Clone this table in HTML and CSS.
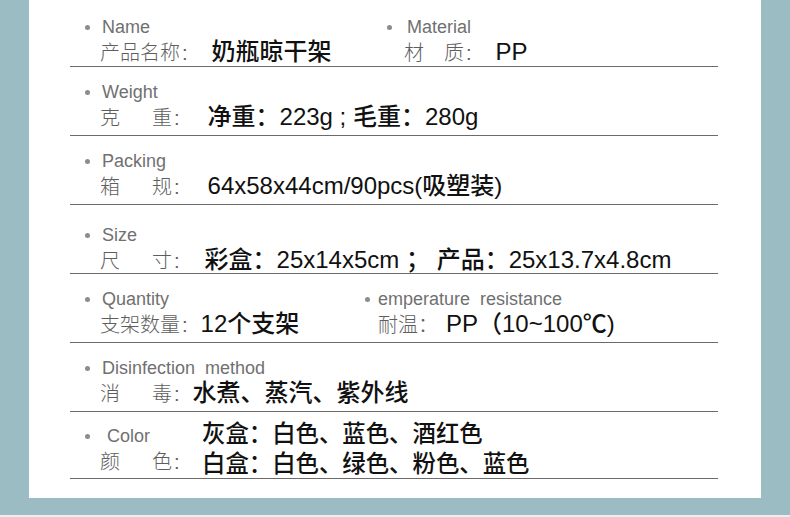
FILE: index.html
```html
<!DOCTYPE html>
<html lang="zh-CN">
    <head>
        <meta charset="UTF-8">
        <meta name="viewport" content="width=device-width, initial-scale=1.0">
        <title>产品参数</title>
        <link rel="stylesheet" href="styles.css">
    </head>
    <body>
        <div class="page">
            <div class="panel">

                <div class="row row-first">
                    <div class="field field-name">
                        <div class="en">Name</div>
                        <div class="line">
                            <span class="label">产品名称</span><span class="colon">:</span>
                            <span class="value gap-wide">奶瓶晾干架</span>
                        </div>
                    </div>
                    <div class="field field-material">
                        <div class="en">Material</div>
                        <div class="line">
                            <span class="label label-short">材质</span><span class="colon">:</span>
                            <span class="value gap-wide">PP</span>
                        </div>
                    </div>
                </div>

                <div class="row">
                    <div class="field">
                        <div class="en">Weight</div>
                        <div class="line">
                            <span class="label label-two">克重</span><span class="colon">:</span>
                            <span class="value gap-two">净重：223g ; 毛重：280g</span>
                        </div>
                    </div>
                </div>

                <div class="row">
                    <div class="field">
                        <div class="en">Packing</div>
                        <div class="line">
                            <span class="label label-two">箱规</span><span class="colon">:</span>
                            <span class="value gap-two">64x58x44cm/90pcs(吸塑装)</span>
                        </div>
                    </div>
                </div>

                <div class="row row-size">
                    <div class="field">
                        <div class="en">Size</div>
                        <div class="line">
                            <span class="label label-two">尺寸</span><span class="colon">:</span>
                            <span class="value gap-mid">彩盒：25x14x5cm ； 产品：25x13.7x4.8cm</span>
                        </div>
                    </div>
                </div>

                <div class="row">
                    <div class="field field-qty">
                        <div class="en">Quantity</div>
                        <div class="line">
                            <span class="label">支架数量</span><span class="colon">:</span>
                            <span class="value gap-small">12个支架</span>
                        </div>
                    </div>
                    <div class="field field-temp">
                        <div class="en">emperature&nbsp; resistance</div>
                        <div class="line">
                            <span class="label">耐温：</span>
                            <span class="value value-plain">PP（10~100℃)</span>
                        </div>
                    </div>
                </div>

                <div class="row">
                    <div class="field">
                        <div class="en">Disinfection&nbsp; method</div>
                        <div class="line">
                            <span class="label label-two">消毒</span><span class="colon">:</span>
                            <span class="value gap-small">水煮、蒸汽、紫外线</span>
                        </div>
                    </div>
                </div>

                <div class="row row-last">
                    <div class="field field-color">
                        <div class="en">&nbsp;Color</div>
                        <div class="line">
                            <span class="label label-two">颜色</span><span class="colon">:</span>
                        </div>
                    </div>
                    <div class="values">
                        <div class="value">灰盒：白色、蓝色、酒红色</div>
                        <div class="value">白盒：白色、绿色、粉色、蓝色</div>
                    </div>
                </div>

            </div>
        </div>
    </body>
</html>
```

FILE: styles.css
```css
body {
    margin: 0;
    padding: 0;
    background-color: #9cbcc4;
    font-family: 'Liberation Sans', 'Noto Sans CJK SC', sans-serif;
}
.page {
    height: 515px;
    border-bottom: 2px solid #e9eeee;
}
.panel {
    margin: 0 29px;
    height: 498px;
    box-sizing: border-box;
    padding: 2px 43px 0 41px;
    background-color: #ffffff;
}
.row {
    display: flex;
    height: 69px;
    box-sizing: border-box;
    border-bottom: 1px solid #6b6b6b;
    padding-top: 16px;
}
.row-first {
    height: 65px;
}
.row-size {
    padding-top: 21px;
}
.row-last {
    height: 67px;
    padding-top: 0;
}
.field {
    display: flex;
    flex-direction: column;
}
.field-name {
    width: 305px;
}
.field-qty {
    width: 297px;
}
.field-color {
    padding-top: 15px;
    width: 130px;
}
.en {
    position: relative;
    margin-left: 32px;
    font-size: 18px;
    line-height: 18px;
    color: #707070;
}
.en::before {
    content: "";
    position: absolute;
    left: -17px;
    top: 7px;
    width: 5px;
    height: 5px;
    border-radius: 50%;
    background-color: #8c8c8c;
}
.field-material .en::before {
    left: -20px;
}
.field-temp .en {
    margin-left: 11px;
}
.field-temp .en::before {
    left: -13px;
}
.line {
    display: flex;
    align-items: baseline;
    margin-top: 4px;
    margin-left: 30px;
    font-size: 20px;
    line-height: 24px;
}
.field-material .line {
    margin-left: 29px;
}
.field-temp .line {
    margin-left: 11px;
}
.label {
    color: #5e5e5e;
    font-family: 'Noto Sans CJK SC', sans-serif;
    font-weight: 300;
    white-space: nowrap;
}
.label-two {
    display: inline-block;
    width: 72px;
    text-align-last: justify;
}
.label-short {
    display: inline-block;
    width: 60px;
    text-align-last: justify;
}
.colon {
    color: #5e5e5e;
    margin-left: 2px;
}
.value {
    color: #111111;
    font-size: 24px;
    font-weight: 500;
    white-space: nowrap;
}
.value-plain {
    margin-left: 8px;
}
.gap-wide {
    margin-left: 24px;
}
.gap-two {
    margin-left: 28px;
}
.gap-mid {
    margin-left: 25px;
}
.gap-small {
    margin-left: 13px;
}
.values {
    display: flex;
    flex-direction: column;
    padding-top: 7px;
    margin-left: 2px;
    line-height: 30px;
}
.values .value {
    font-size: 23.4px;
}
```
